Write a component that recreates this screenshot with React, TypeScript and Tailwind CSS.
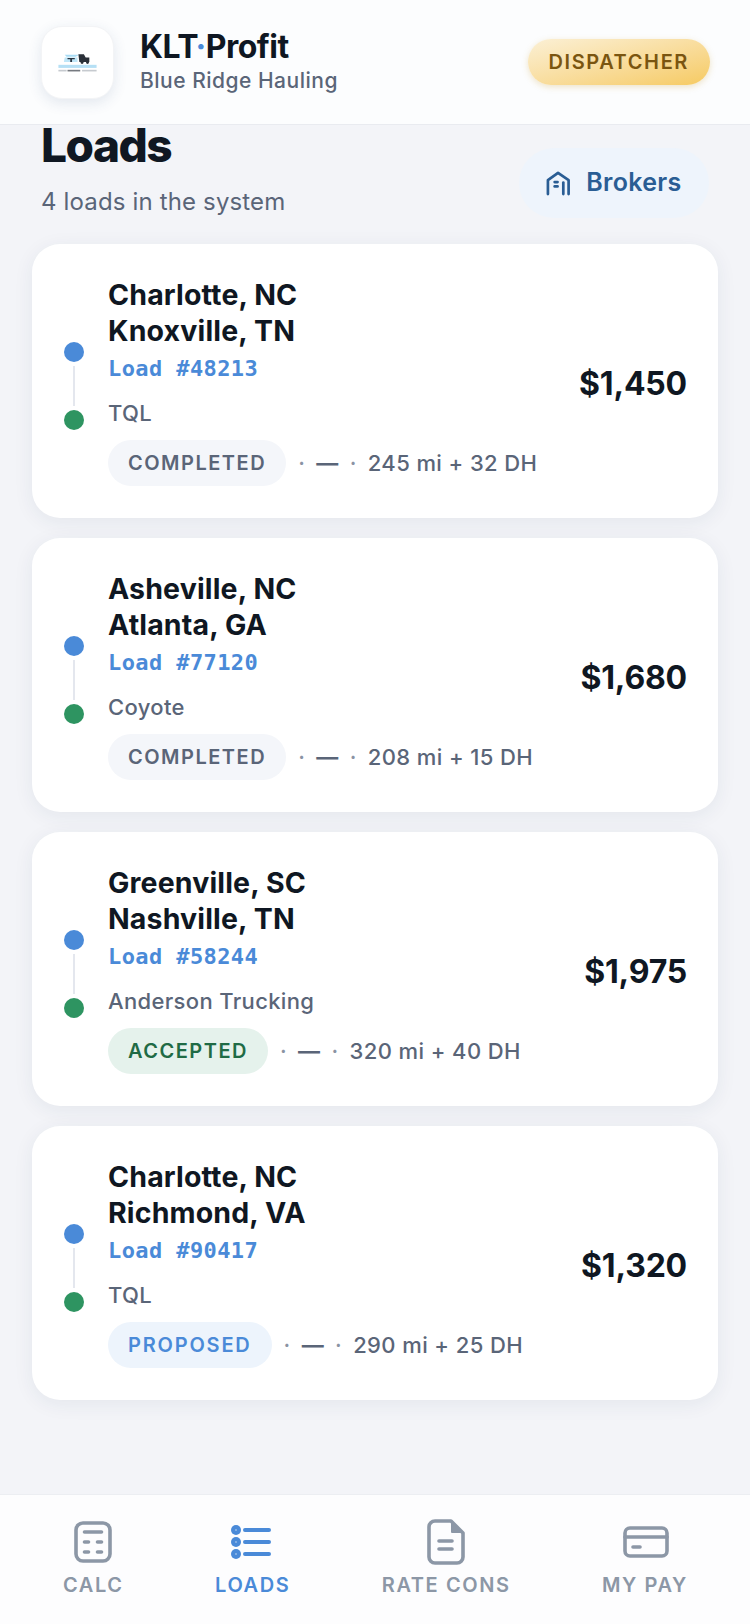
import React from "react";

type Load = {
  from: string;
  to: string;
  num: string;
  broker: string;
  status: "COMPLETED" | "ACCEPTED" | "PROPOSED";
  miles: string;
  price: string;
};

const loads: Load[] = [
  { from: "Charlotte, NC", to: "Knoxville, TN", num: "48213", broker: "TQL", status: "COMPLETED", miles: "245 mi + 32 DH", price: "$1,450" },
  { from: "Asheville, NC", to: "Atlanta, GA", num: "77120", broker: "Coyote", status: "COMPLETED", miles: "208 mi + 15 DH", price: "$1,680" },
  { from: "Greenville, SC", to: "Nashville, TN", num: "58244", broker: "Anderson Trucking", status: "ACCEPTED", miles: "320 mi + 40 DH", price: "$1,975" },
  { from: "Charlotte, NC", to: "Richmond, VA", num: "90417", broker: "TQL", status: "PROPOSED", miles: "290 mi + 25 DH", price: "$1,320" },
];

const statusStyles = {
  COMPLETED: "bg-[#f4f6fa] text-[#5a6578] tracking-[1.5px]",
  ACCEPTED: "bg-[#e5f2ec] text-[#1f6b45] tracking-[1.5px]",
  PROPOSED: "bg-[#edf4fc] text-[#4a8ad8] tracking-[1.8px]",
};

function Logo() {
  return (
    <svg width="41" height="20" viewBox="0 0 44 22" className="mt-[2px]">
      <path d="M8 2 H24 L20 4 H10 Z" fill="#a9dcf5" />
      <path d="M8 5 H22 V10 H7 Z" fill="#bfe6f8" />
      <path d="M11 5.5 H19 V7 H16 V10 H14 V7 H11 Z" fill="#2a3440" />
      <path d="M23 1.5 H29 L31 5 H35 V10 H24 Z" fill="#2a3038" />
      <circle cx="27" cy="10.5" r="1.6" fill="#2a3038" />
      <circle cx="33" cy="10.5" r="1.6" fill="#2a3038" />
      <rect x="1" y="13" width="42" height="3.4" fill="#b6e0f5" />
      <rect x="1" y="18.5" width="9" height="1.8" fill="#c6cacf" />
      <rect x="11" y="18.5" width="14" height="1.8" fill="#767a80" />
      <rect x="27" y="18.5" width="16" height="1.8" fill="#c6cacf" />
    </svg>
  );
}

function WarehouseIcon() {
  return (
    <svg width="25" height="25" viewBox="0 0 26 26" fill="none" stroke="#2a5d94" strokeWidth="2.8" strokeLinecap="round" strokeLinejoin="round">
      <path d="M2 24 V9.5 L12.5 2 L23.5 9.5 V24" />
      <path d="M18 24 V12" />
      <path d="M9 11.5 H12" />
      <path d="M9 16 H12" />
    </svg>
  );
}

function CalcIcon({ color }: { color: string }) {
  return (
    <svg width="38" height="42" viewBox="0 0 38 42" fill="none" stroke={color} strokeWidth="3.6" strokeLinecap="round">
      <rect x="2" y="2" width="34" height="38" rx="7" />
      <path d="M10.5 11 H27.5" />
      <path d="M10.5 21 H14.5" />
      <path d="M23.5 21 H27.5" />
      <path d="M10.5 31 H14.5" />
      <path d="M23.5 31 H27.5" />
    </svg>
  );
}

function ListIcon({ color }: { color: string }) {
  return (
    <svg width="40" height="36" viewBox="0 0 40 36" fill="none" className="mr-[3px]">
      <circle cx="5" cy="6" r="5" fill={color} />
      <circle cx="5" cy="18" r="5" fill={color} />
      <circle cx="5" cy="30" r="5" fill={color} />
      <circle cx="5" cy="6" r="1" fill="#ffffff" fillOpacity="0.4" />
      <circle cx="5" cy="18" r="1" fill="#ffffff" fillOpacity="0.4" />
      <circle cx="5" cy="30" r="1" fill="#ffffff" fillOpacity="0.4" />
      <path d="M14 6 H38 M14 18 H38 M14 30 H38" stroke={color} strokeWidth="4" strokeLinecap="round" />
    </svg>
  );
}

function DocIcon({ color }: { color: string }) {
  return (
    <svg width="38" height="46" viewBox="0 0 38 46" fill="none" stroke={color} strokeWidth="3.6" strokeLinecap="round" strokeLinejoin="round">
      <path d="M8 2 H24 L36 14 V38 A6 6 0 0 1 30 44 H8 A6 6 0 0 1 2 38 V8 A6 6 0 0 1 8 2 Z" />
      <path d="M25 3 V13 H35" fill={color} strokeWidth="2" />
      <path d="M12 22 H25" />
      <path d="M12 30 H25" />
    </svg>
  );
}

function CardIcon({ color }: { color: string }) {
  return (
    <svg width="46" height="32" viewBox="0 0 46 32" fill="none" stroke={color} strokeWidth="3.6" strokeLinecap="round" className="ml-[2px]">
      <rect x="2" y="2" width="42" height="28" rx="5" />
      <path d="M2 11 H44" />
      <path d="M10 21 H17" />
    </svg>
  );
}

function LoadCard({ load }: { load: Load }) {
  return (
    <div className="flex h-[274px] items-center justify-between rounded-[28px] bg-white pl-8 pr-[31px] pt-[1px] shadow-[0_4px_20px_rgba(30,50,90,0.07)]">
      <div className="flex items-center gap-[24px]">
        <div className="flex w-5 flex-col items-center pt-2">
          <div className="h-5 w-5 rounded-full bg-[#4a8ad8]" />
          <div className="my-1 h-10 w-0.5 bg-[#e4e7ee]" />
          <div className="h-5 w-5 rounded-full bg-[#2e9461]" />
        </div>
        <div>
          <div className="text-[28.5px] leading-9 font-bold tracking-[0.15px] text-[#0f1722]">{load.from}</div>
          <div className="text-[28.5px] leading-9 font-bold tracking-[0.15px] text-[#0f1722]">{load.to}</div>
          <div className="mt-[5px] text-[22px] leading-[30px] font-semibold tracking-[0.4px] text-[#4a8ad8] [font-family:'DejaVu_Sans_Mono',monospace]">
            Load #{load.num}
          </div>
          <div className="mt-[14px] text-[22px] leading-[30px] font-medium tracking-[0.35px] text-[#5a6578]">{load.broker}</div>
          <div className="mt-[12px] flex items-center">
            <span className={`rounded-full px-5 text-[20px] leading-[46px] font-semibold ${statusStyles[load.status]}`}>
              {load.status}
            </span>
            <span className="ml-[12px] flex items-center gap-[11px] text-[22px] font-medium tracking-[0.4px] text-[#5a6578]">
              <span className="text-[#8a93a3]">·</span>
              <span className="font-bold">—</span>
              <span className="text-[#8a93a3]">·</span>
              <span>{load.miles}</span>
            </span>
          </div>
        </div>
      </div>
      <div className="pt-1 text-[32px] font-bold tracking-[-0.2px] text-[#0f1722]">{load.price}</div>
    </div>
  );
}

function NavItem({ label, active, children }: { label: string; active?: boolean; children: React.ReactNode }) {
  return (
    <div className={`flex flex-col items-center ${active ? "text-[#4a8ad8]" : "text-[#8c97a6]"}`}>
      <div className="flex h-[46px] items-center justify-center">{children}</div>
      <div className="mt-2 text-[20px] leading-6 font-semibold tracking-[1.6px]">{label}</div>
    </div>
  );
}

export default function App() {
  return (
    <div className="flex h-[1624px] w-[750px] flex-col overflow-hidden bg-[#f3f4f8] [font-family:Inter,sans-serif] [font-optical-sizing:none]">
      <header className="flex h-[125px] shrink-0 items-center justify-between border-b border-[#e9ebf0] bg-[#fcfdfe] pl-[41px] pr-10">
        <div className="flex items-center gap-[26px]">
          <div className="flex h-[73px] w-[73px] items-center justify-center rounded-[21px] border border-[#f3f4f6] bg-white shadow-[0_4px_14px_rgba(40,70,120,0.12)]">
            <Logo />
          </div>
          <div className="mb-[2px]">
            <div className="text-[32px] leading-9 font-bold tracking-[-0.5px] text-[#0f1722]">
              KLT<span className="text-[#4a8ad8]">·</span>Profit
            </div>
            <div className="mt-1 text-[21px] leading-6 font-medium tracking-[0.5px] text-[#5a6578]">Blue Ridge Hauling</div>
          </div>
        </div>
        <div className="rounded-full bg-gradient-to-br from-[#fbf0d5] to-[#f6ca60] px-[21px] text-[20px] leading-[46px] font-semibold tracking-[1.6px] text-[#7a5510] shadow-[0_2px_6px_rgba(200,150,40,0.25)]">
          DISPATCHER
        </div>
      </header>

      <main className="flex-1 px-8">
        <div className="flex items-start justify-between pl-[9px]">
          <div>
            <h1 className="text-[46px] leading-[40px] font-extrabold tracking-[-1.5px] text-[#0f1722]">Loads</h1>
            <p className="mt-[21px] text-[24px] leading-8 tracking-[0.15px] text-[#5a6578]">4 loads in the system</p>
          </div>
          <div className="mt-[23px] mr-[9px] flex h-[70px] w-[190px] items-center justify-center gap-[15px] rounded-full bg-[#eef4fc] text-[25px] font-semibold tracking-[0.3px] text-[#2a5d94]">
            <WarehouseIcon />
            Brokers
          </div>
        </div>

        <div className="mt-[26px] flex flex-col gap-5">
          {loads.map((l) => (
            <LoadCard key={l.num} load={l} />
          ))}
        </div>
      </main>

      <nav className="flex h-[130px] shrink-0 justify-between border-t border-[#eceef2] bg-[#fdfdfe] pl-[63px] pr-[62px] pt-6">
        <NavItem label="CALC">
          <CalcIcon color="#8c97a6" />
        </NavItem>
        <NavItem label="LOADS" active>
          <ListIcon color="#4a8ad8" />
        </NavItem>
        <NavItem label="RATE CONS">
          <DocIcon color="#8c97a6" />
        </NavItem>
        <NavItem label="MY PAY">
          <CardIcon color="#8c97a6" />
        </NavItem>
      </nav>
    </div>
  );
}
